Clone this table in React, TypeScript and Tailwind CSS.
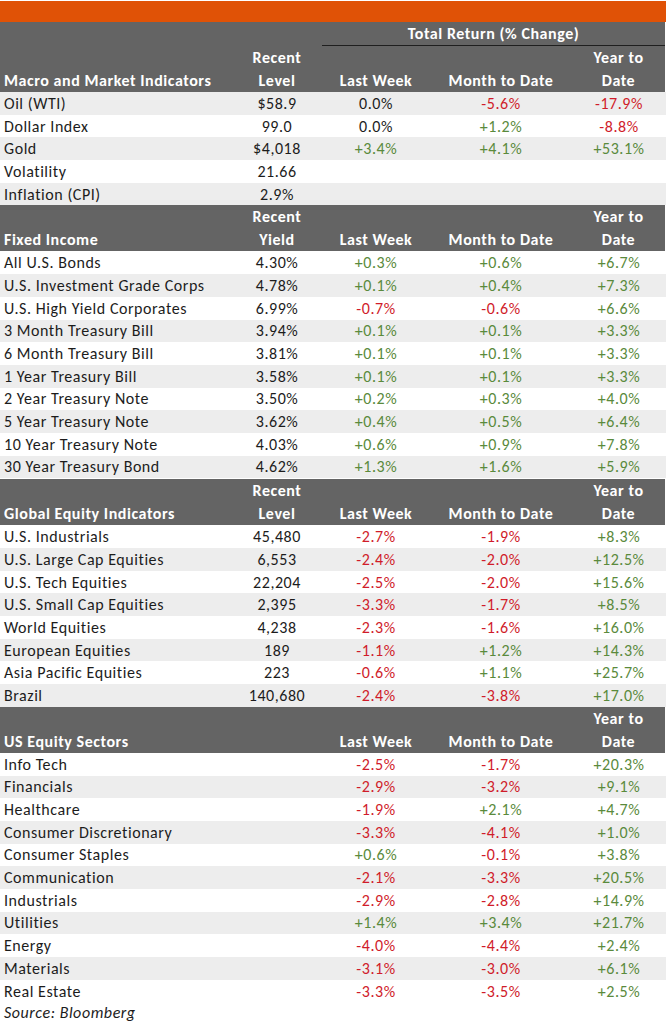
import React from "react";

type Row = [string, string, string?, string?, string?];

const macro: Row[] = [
  ["Oil (WTI)", "$58.9", "0.0%", "-5.6%", "-17.9%"],
  ["Dollar Index", "99.0", "0.0%", "+1.2%", "-8.8%"],
  ["Gold", "$4,018", "+3.4%", "+4.1%", "+53.1%"],
  ["Volatility", "21.66"],
  ["Inflation (CPI)", "2.9%"],
];

const fixedIncome: Row[] = [
  ["All U.S. Bonds", "4.30%", "+0.3%", "+0.6%", "+6.7%"],
  ["U.S. Investment Grade Corps", "4.78%", "+0.1%", "+0.4%", "+7.3%"],
  ["U.S. High Yield Corporates", "6.99%", "-0.7%", "-0.6%", "+6.6%"],
  ["3 Month Treasury Bill", "3.94%", "+0.1%", "+0.1%", "+3.3%"],
  ["6 Month Treasury Bill", "3.81%", "+0.1%", "+0.1%", "+3.3%"],
  ["1 Year Treasury Bill", "3.58%", "+0.1%", "+0.1%", "+3.3%"],
  ["2 Year Treasury Note", "3.50%", "+0.2%", "+0.3%", "+4.0%"],
  ["5 Year Treasury Note", "3.62%", "+0.4%", "+0.5%", "+6.4%"],
  ["10 Year Treasury Note", "4.03%", "+0.6%", "+0.9%", "+7.8%"],
  ["30 Year Treasury Bond", "4.62%", "+1.3%", "+1.6%", "+5.9%"],
];

const globalEquity: Row[] = [
  ["U.S. Industrials", "45,480", "-2.7%", "-1.9%", "+8.3%"],
  ["U.S. Large Cap Equities", "6,553", "-2.4%", "-2.0%", "+12.5%"],
  ["U.S. Tech Equities", "22,204", "-2.5%", "-2.0%", "+15.6%"],
  ["U.S. Small Cap Equities", "2,395", "-3.3%", "-1.7%", "+8.5%"],
  ["World Equities", "4,238", "-2.3%", "-1.6%", "+16.0%"],
  ["European Equities", "189", "-1.1%", "+1.2%", "+14.3%"],
  ["Asia Pacific Equities", "223", "-0.6%", "+1.1%", "+25.7%"],
  ["Brazil", "140,680", "-2.4%", "-3.8%", "+17.0%"],
];

const sectors: Row[] = [
  ["Info Tech", "", "-2.5%", "-1.7%", "+20.3%"],
  ["Financials", "", "-2.9%", "-3.2%", "+9.1%"],
  ["Healthcare", "", "-1.9%", "+2.1%", "+4.7%"],
  ["Consumer Discretionary", "", "-3.3%", "-4.1%", "+1.0%"],
  ["Consumer Staples", "", "+0.6%", "-0.1%", "+3.8%"],
  ["Communication", "", "-2.1%", "-3.3%", "+20.5%"],
  ["Industrials", "", "-2.9%", "-2.8%", "+14.9%"],
  ["Utilities", "", "+1.4%", "+3.4%", "+21.7%"],
  ["Energy", "", "-4.0%", "-4.4%", "+2.4%"],
  ["Materials", "", "-3.1%", "-3.0%", "+6.1%"],
  ["Real Estate", "", "-3.3%", "-3.5%", "+2.5%"],
];

// label | recent | last week | month to date | year to date
const cols = "grid grid-cols-[232px_90px_108px_142px_1fr]";

function changeColor(v?: string) {
  if (v?.startsWith("+")) return "text-[#5a8a3c]";
  if (v?.startsWith("-")) return "text-[#d01c2a]";
  return "text-[#1c1c1c]";
}

function Header({ title, level, extraTop }: { title: string; level?: string; extraTop?: boolean }) {
  return (
    <div className="mr-px bg-[#646464] font-bold text-white">
      {extraTop && (
        <div className={`${cols} h-[24px]`}>
          <div className="col-span-2" />
          <div className="col-span-3 flex items-center justify-center border-b border-[#1f1f1f] pt-px">
            Total Return (% Change)
          </div>
        </div>
      )}
      <div className={`${cols} h-[23px] items-center pt-px text-center`}>
        <div />
        <div>{level ? "Recent" : ""}</div>
        <div />
        <div />
        <div>Year to</div>
      </div>
      <div className={`${cols} h-[23px] items-center pt-px text-center`}>
        <div className="pl-1 text-left">{title}</div>
        <div>{level ?? ""}</div>
        <div>Last Week</div>
        <div>Month to Date</div>
        <div>Date</div>
      </div>
    </div>
  );
}

function Rows({ rows, startShaded }: { rows: Row[]; startShaded: boolean }) {
  return (
    <div>
      {rows.map((r, i) => {
        const shaded = startShaded ? i % 2 === 0 : i % 2 === 1;
        return (
          <div
            key={r[0]}
            className={`${cols} h-[22.7px] items-center pt-px text-center ${shaded ? "bg-[#ededed]" : "bg-white"}`}
          >
            <div className="pl-1 text-left text-[#1c1c1c]">{r[0]}</div>
            <div className="text-[#1c1c1c]">{r[1]}</div>
            <div className={changeColor(r[2])}>{r[2] ?? ""}</div>
            <div className={changeColor(r[3])}>{r[3] ?? ""}</div>
            <div className={changeColor(r[4])}>{r[4] ?? ""}</div>
          </div>
        );
      })}
    </div>
  );
}

export default function App() {
  return (
    <div className="w-[666px] bg-white text-[16px] leading-none tracking-[0.55px] [font-family:Carlito,Lato,sans-serif]">
      <div className="mt-px h-[21px] bg-[#e05206]" />
      <Header title="Macro and Market Indicators" level="Level" extraTop />
      <Rows rows={macro} startShaded />
      <Header title="Fixed Income" level="Yield" />
      <Rows rows={fixedIncome} startShaded={false} />
      <div className="h-px" />
      <Header title="Global Equity Indicators" level="Level" />
      <Rows rows={globalEquity} startShaded={false} />
      <Header title="US Equity Sectors" />
      <Rows rows={sectors} startShaded={false} />
      <div className="flex h-[22px] items-center pl-1 italic text-[#1c1c1c]">Source: Bloomberg</div>
    </div>
  );
}
